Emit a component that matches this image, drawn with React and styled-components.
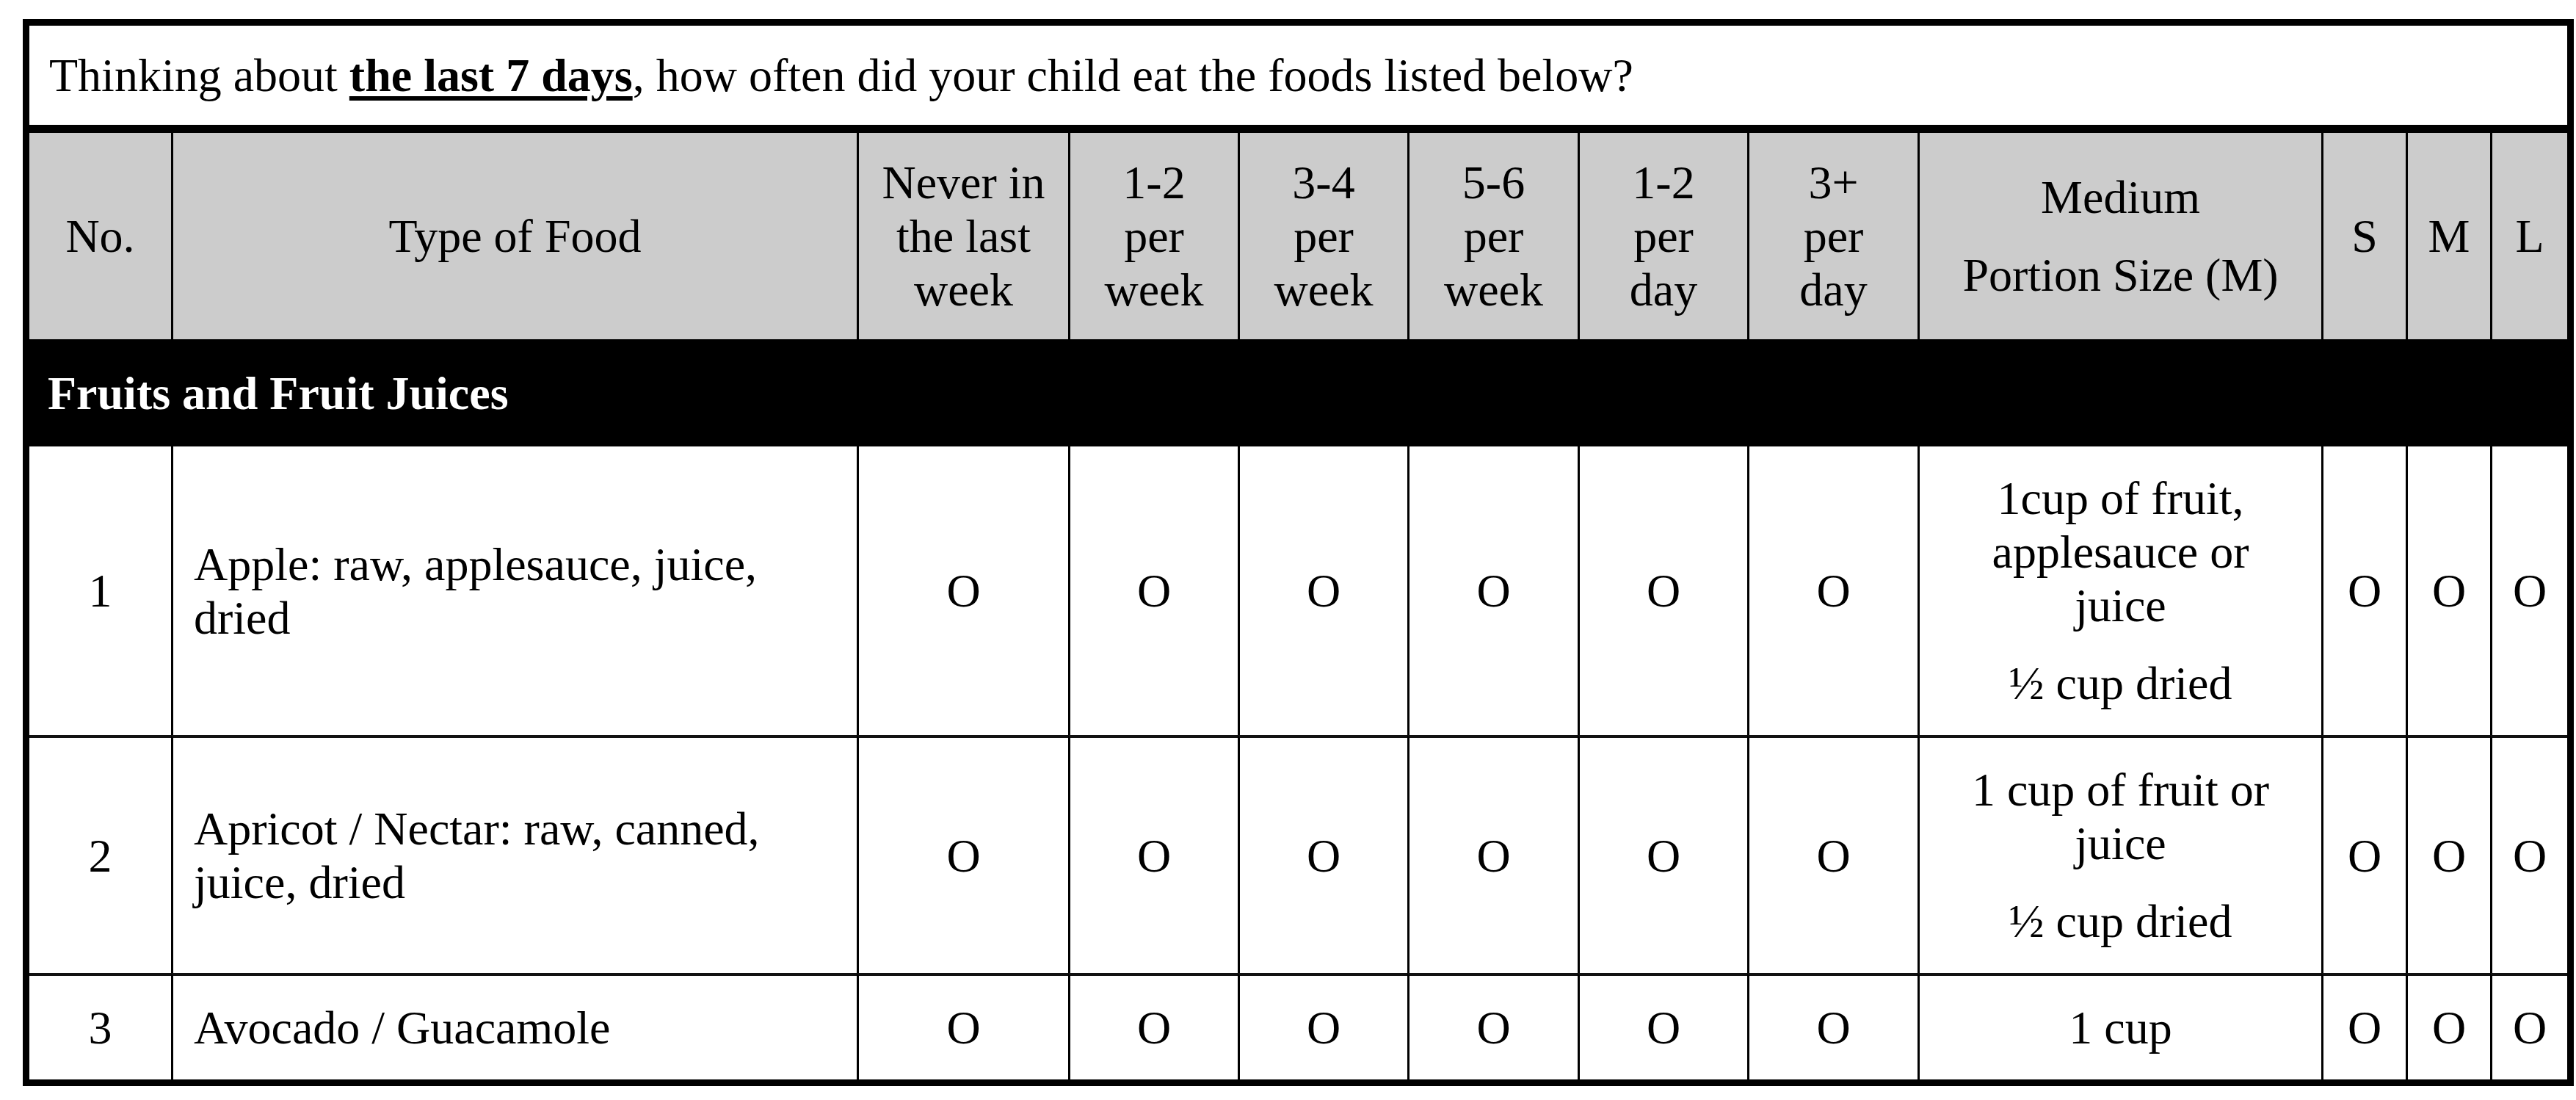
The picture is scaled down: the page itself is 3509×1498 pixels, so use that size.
import React from 'react'
import styled, { createGlobalStyle } from 'styled-components'

const GlobalStyle = createGlobalStyle`
  html, body {
    margin: 0;
    background: #fff;
  }
  body {
    font-family: "Liberation Serif", "Times New Roman", serif;
    color: #000;
  }
`

const widths = [193, 934, 288, 231, 231, 232, 231, 232, 550, 115, 115, 105]

const Page = styled.div`
  padding: 26px 0 0 31px;
`

const Frame = styled.div`
  box-sizing: border-box;
  width: 3475px;
  border: 9px solid #000;
  display: grid;
  grid-template-columns: ${widths.map((w) => w + 'px').join(' ')};
  font-size: 64px;
  line-height: 73px;
`

const Prompt = styled.div`
  grid-column: 1 / -1;
  padding: 31px 27px;
  border-bottom: 11px solid #000;
`

const Emph = styled.span`
  font-weight: bold;
  text-decoration: underline;
  text-decoration-thickness: 6px;
  text-underline-offset: 7px;
`

const HeadCell = styled.div`
  background: #cccccc;
  border-left: ${(p) => (p.$first ? 'none' : '3px solid #000')};
  padding: 31px 4px;
  display: flex;
  flex-direction: column;
  align-items: center;
  justify-content: center;
  text-align: center;
  gap: ${(p) => (p.$split ? '33px' : '0')};
`

const SectionBar = styled.div`
  grid-column: 1 / -1;
  background: #000;
  color: #fff;
  font-weight: bold;
  height: 146px;
  padding: 0 25px;
  display: flex;
  align-items: center;
`

const Cell = styled.div`
  border-left: ${(p) => (p.$first ? 'none' : '3px solid #000')};
  border-top: ${(p) => (p.$top ? '4px solid #111' : 'none')};
  padding: ${(p) => (p.$text ? '34px 40px 34px 28px' : '34px 4px')};
  display: flex;
  flex-direction: column;
  align-items: ${(p) => (p.$text ? 'flex-start' : 'center')};
  justify-content: center;
  text-align: ${(p) => (p.$text ? 'left' : 'center')};
`

const Portion = styled(Cell)`
  padding: 34px 36px;
  gap: 33px;
`

const headers = [
  ['No.'],
  ['Type of Food'],
  ['Never in', 'the last', 'week'],
  ['1-2', 'per', 'week'],
  ['3-4', 'per', 'week'],
  ['5-6', 'per', 'week'],
  ['1-2', 'per', 'day'],
  ['3+', 'per', 'day'],
]

const foods = [
  {
    no: '1',
    name: ['Apple: raw, applesauce, juice,', 'dried'],
    portion: [['1cup of fruit,', 'applesauce or', 'juice'], ['½ cup dried']],
  },
  {
    no: '2',
    name: ['Apricot / Nectar: raw, canned,', 'juice, dried'],
    portion: [['1 cup of fruit or', 'juice'], ['½ cup dried']],
  },
  {
    no: '3',
    name: ['Avocado / Guacamole'],
    portion: [['1 cup']],
  },
]

const Lines = ({ lines }) =>
  lines.map((l, i) => (
    <React.Fragment key={i}>
      {i > 0 && <br />}
      {l}
    </React.Fragment>
  ))

const App = () => {
  return (
    <Page>
      <GlobalStyle />
      <Frame>
        <Prompt>
          Thinking about <Emph>the last 7 days</Emph>, how often did your child eat the foods listed below?
        </Prompt>

        {headers.map((h, i) => (
          <HeadCell key={i} $first={i === 0}>
            <div>
              <Lines lines={h} />
            </div>
          </HeadCell>
        ))}
        <HeadCell $split>
          <div>Medium</div>
          <div>Portion Size (M)</div>
        </HeadCell>
        <HeadCell>S</HeadCell>
        <HeadCell>M</HeadCell>
        <HeadCell>L</HeadCell>

        <SectionBar>Fruits and Fruit Juices</SectionBar>

        {foods.map((f, r) => (
          <React.Fragment key={f.no}>
            <Cell $first $top={r > 0}>{f.no}</Cell>
            <Cell $text $top={r > 0}>
              <div>
                <Lines lines={f.name} />
              </div>
            </Cell>
            {[0, 1, 2, 3, 4, 5].map((k) => (
              <Cell key={'f' + k} $top={r > 0}>O</Cell>
            ))}
            <Portion $top={r > 0}>
              {f.portion.map((p, i) => (
                <div key={i}>
                  <Lines lines={p} />
                </div>
              ))}
            </Portion>
            {['S', 'M', 'L'].map((s) => (
              <Cell key={s} $top={r > 0}>O</Cell>
            ))}
          </React.Fragment>
        ))}
      </Frame>
    </Page>
  )
}

export default App
